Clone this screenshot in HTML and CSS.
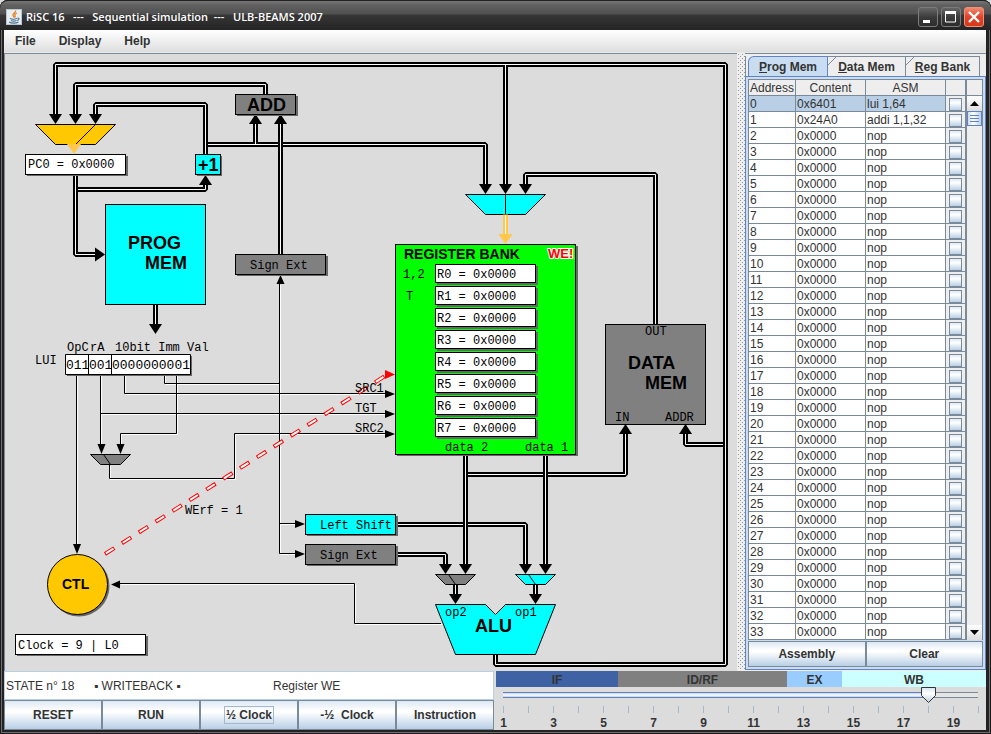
FILE: index.html
```html
<!DOCTYPE html>
<html lang="en">
<head>
<meta charset="utf-8">
<title>RiSC 16 --- Sequential simulation --- ULB-BEAMS 2007</title>
<link rel="stylesheet" href="styles.css">
</head>
<body>
<div class="window">
  <header class="titlebar">
    <svg class="app-icon" width="16" height="16" viewBox="0 0 16 16" aria-hidden="true">
      <rect x="0.5" y="0.5" width="15" height="15" fill="#e9eef2" stroke="#b9c6d0"/>
      <path d="M9.500 1.500c1 2-3.500 3-2.500 5 .3.700 1 1.200 1 2M11 4c-2 .8-2.500 1.600-2 2.600.4.900.3 1.400-.4 2" fill="none" stroke="#e8801c" stroke-width="1.300"/>
      <path d="M4 9.500c2 .9 5 .8 7 0M5 11.500c1.500.7 4 .7 5.500 0M3 13c2.500 1.500 7 1.500 9.500 0M11.500 9.200c2-.4 2 1.800-.3 2.300" fill="none" stroke="#4b7391" stroke-width="1.200"/>
    </svg>
    <h1 class="title">RiSC 16   ---   Sequential simulation  ---   ULB-BEAMS 2007</h1>
    <div class="controls">
      <button class="control" aria-label="Minimize"><svg width="20" height="20" viewBox="0 0 20 20"><rect x="5" y="13" width="7" height="3" fill="#fff"/></svg></button>
      <button class="control" aria-label="Maximize"><svg width="20" height="20" viewBox="0 0 20 20"><path d="M4.500 5v10h10V5z" fill="none" stroke="#fff"/><path d="M4 5.500h11" stroke="#fff" stroke-width="3"/></svg></button>
      <button class="control close" aria-label="Close"><svg width="20" height="20" viewBox="0 0 20 20"><path d="M5 5l10 10M15 5L5 15" stroke="#fff" stroke-width="2.400"/></svg></button>
    </div>
  </header>

  <nav class="menubar">
    <button class="menu">File</button>
    <button class="menu">Display</button>
    <button class="menu">Help</button>
  </nav>

  <main class="workspace">
    <section class="canvas">
      <svg class="schema" width="732" height="616" viewBox="5 54 732 616" role="img" aria-label="RiSC 16 datapath">
        <defs>
          <path id="down" d="M-6.500 0H6.500L0 10z"/>
          <path id="up" d="M-6.500 0H6.500L0-10z"/>
          <path id="down-s" d="M-4 0H4L0 10z"/>
          <path id="right-s" d="M0-4V4L10 0z"/>
          <!-- Wide buses: each path is drawn once in black and once as the white core -->
          <path id="bus-1" d="M205.500 144.500H485.500V185M465.500 474.500H625.500V434M397 524.500H525.500V565M397 554.500H445.500V565M75.500 189.500H205.500V184M725.500 444.500H685.500V434"/>
          <path id="bus-2" d="M495.500 655V664.500H725.500V64.500H55.500V115M265.500 94V84.500H75.500V115M205.500 154V104.500H95.500V115M655.500 324V174.500H525.500V185M75.500 175V254.500H96"/>
          <path id="bus-3" d="M505.500 65V185M255.500 144V124M280.500 254V124M155.500 305V325M465.500 456V565M545.500 456V565M455.500 585V595M535.500 585V595"/>
          <!-- Single wires, with a white highlight one pixel down and right -->
          <path id="wires" d="M76.500 375V545M100.500 375V445M100.500 413.500H386M124.500 375V393.500H386M164.500 375V383.500H279.500M176.500 375V433.500H120.500V445M109.500 465V478.500H234.500V433.500H386M279.500 284V553.500H296M279.500 523.500H296M441 623.500H354.500V583.500H120"/>
        </defs>

        <use href="#wires" class="wire-light" x="1" y="1"/>
        <use href="#wires" class="wire"/>
        <use href="#bus-1" class="bus"/><use href="#bus-1" class="core"/>
        <use href="#bus-2" class="bus"/><use href="#bus-2" class="core"/>
        <use href="#bus-3" class="bus"/><use href="#bus-3" class="core"/>

        <g>
          <use href="#down" x="55.500" y="114"/><use href="#down" x="75.500" y="114"/><use href="#down" x="95.500" y="114"/>
          <use href="#down" x="485.500" y="184"/><use href="#down" x="505.500" y="184"/><use href="#down" x="525.500" y="184"/>
          <use href="#down" x="155.500" y="324"/>
          <use href="#down" x="445.500" y="564"/><use href="#down" x="465.500" y="564"/><use href="#down" x="525.500" y="564"/><use href="#down" x="545.500" y="564"/>
          <use href="#down" x="455.500" y="594"/><use href="#down" x="535.500" y="594"/>
          <use href="#up" x="255.500" y="124"/><use href="#up" x="280.500" y="124"/><use href="#up" x="205.500" y="185"/>
          <use href="#up" x="625.500" y="434"/><use href="#up" x="685.500" y="434"/>
          <path d="M95 247.500v14l10-7z"/>
          <use href="#down-s" x="77" y="544"/><use href="#down-s" x="101.500" y="444"/><use href="#down-s" x="120.500" y="444"/>
          <use href="#right-s" x="385" y="394"/><use href="#right-s" x="385" y="414"/><use href="#right-s" x="385" y="434"/>
          <use href="#right-s" x="295" y="524"/><use href="#right-s" x="295" y="554"/>
          <path d="M276.500 284h8l-4-9zM120 580.500v8l-9-4z"/>
        </g>

        <!-- Multiplexers -->
        <g class="part">
          <path class="gold" d="M35.500 124.500h80l-20 20h-40z"/><path d="M95.500 124.500l-20 20"/>
          <path class="cyan" d="M465.500 194.500h80l-20 20h-40z"/><path d="M505.500 194.500v20"/>
          <path class="gray" d="M90.500 454.500h40l-10 10h-20z"/><path d="M103.500 454.500l7 10"/>
          <path class="gray" d="M435.500 574.500h40l-10 10h-20z"/><path d="M448.500 574.500l7 10"/>
          <path class="cyan" d="M515.500 574.500h40l-10 10h-20z"/><path d="M528.500 574.500l7 10"/>
          <path class="cyan" d="M435.500 604.500h50l10 10 10-10h50l-20 50h-80z"/>
        </g>
        <path class="live" d="M67 144h14l-7 10z"/>
        <path class="live" d="M503 214.500h5V234h4.500l-7 10-7-10h4.500z"/>
        <path class="core" d="M505.500 215v19"/>

        <!-- Box shadows -->
        <g class="shadow">
          <rect x="27" y="156" width="101" height="20"/>
          <rect x="197" y="156" width="25" height="20"/>
          <rect x="237" y="96" width="61" height="20"/>
          <rect x="237" y="256" width="91" height="20"/>
          <rect x="67" y="356" width="125" height="20"/>
          <rect x="307" y="516" width="91" height="20"/>
          <rect x="307" y="546" width="91" height="20"/>
          <rect x="397" y="246" width="181" height="210"/>
          <rect x="17" y="636" width="131" height="20"/>
          <circle cx="79" cy="586" r="30.500"/>
        </g>

        <!-- Blocks -->
        <g class="part">
          <rect class="white" x="25.500" y="154.500" width="100" height="20"/>
          <rect class="cyan" x="195.500" y="154.500" width="25" height="20"/>
          <rect class="gray" x="235.500" y="94.500" width="60" height="20"/>
          <rect class="gray" x="235.500" y="254.500" width="90" height="20"/>
          <rect class="cyan" x="105.500" y="204.500" width="100" height="100"/>
          <path class="white" d="M65.500 354.500h125v20h-125zM88.500 354.500v20M111.500 354.500v20"/>
          <rect class="cyan" x="305.500" y="514.500" width="90" height="20"/>
          <rect class="gray" x="305.500" y="544.500" width="90" height="20"/>
          <rect class="green" x="395.500" y="244.500" width="180" height="210"/>
          <rect class="gray" x="605.500" y="324.500" width="100" height="100"/>
          <rect class="white" x="15.500" y="634.500" width="130" height="20"/>
          <circle class="gold" cx="77.500" cy="584.500" r="30"/>
        </g>
        <g class="registers"></g>

        <!-- Control signal -->
        <path class="signal" d="M105 554L385 376"/>
        <path class="signal-core" d="M105 554L385 376"/>
        <path d="M385 370v9l10-4.500z" fill="#f00"/>

        <g class="big">
          <text x="247" y="111">ADD</text>
          <text x="198" y="171">+1</text>
          <text x="128" y="249">PROG</text><text x="145" y="269">MEM</text>
          <text x="628" y="369">DATA</text><text x="645" y="389">MEM</text>
          <text x="475" y="632">ALU</text>
        </g>
        <g class="medium">
          <text x="404" y="259">REGISTER BANK</text>
          <text x="62" y="589">CTL</text>
          <text class="we" x="548" y="258">WE!</text>
        </g>
        <g class="mono">
          <text x="28" y="168">PC0 = 0x0000</text>
          <text x="250" y="269">Sign Ext</text>
          <text x="67" y="351">OpC</text><text x="90" y="351">rA</text><text x="115" y="351">10bit Imm Val</text>
          <text x="35" y="364">LUI</text>
          <g class="bits"><text x="66" y="369">011</text><text x="89" y="369">001</text><text x="112" y="369">0000000001</text></g>
          <text x="403" y="278">1,2</text><text x="406" y="300">T</text>
          <text x="355" y="392">SRC1</text><text x="355" y="412">TGT</text><text x="355" y="432">SRC2</text>
          <text x="445" y="451">data 2</text><text x="525" y="451">data 1</text>
          <text x="645" y="335">OUT</text><text x="615" y="421">IN</text><text x="665" y="421">ADDR</text>
          <text x="185" y="514">WErf = 1</text>
          <text x="320" y="529">Left Shift</text><text x="320" y="559">Sign Ext</text>
          <text x="445" y="616">op2</text><text x="515" y="616">op1</text>
          <text x="18" y="649">Clock = 9 | L0</text>
        </g>
      </svg>
    </section>

    <div class="splitter" role="separator"></div>

    <aside class="memory">
      <div class="tabs" role="tablist">
        <button class="tab active" role="tab" aria-selected="true"><u>P</u>rog Mem</button>
        <button class="tab" role="tab"><u>D</u>ata Mem</button>
        <button class="tab" role="tab"><u>R</u>eg Bank</button>
      </div>
      <div class="panel">
        <div class="listing">
          <table>
            <colgroup><col class="c-address"><col class="c-content"><col class="c-asm"><col class="c-check"></colgroup>
            <thead><tr><th>Address</th><th>Content</th><th>ASM</th><th></th></tr></thead>
            <tbody id="rows"></tbody>
          </table>
          <div class="scrollbar">
            <div class="scroll-head"></div>
            <button class="scroll-step" aria-label="Scroll up"><svg width="9" height="5"><path d="M0 5L4.500 0 9 5z"/></svg></button>
            <div class="scroll-thumb"></div>
            <div class="scroll-track"></div>
            <button class="scroll-step" aria-label="Scroll down"><svg width="9" height="5"><path d="M0 0H9L4.500 5z"/></svg></button>
          </div>
        </div>
        <div class="actions">
          <button class="btn">Assembly</button>
          <button class="btn">Clear</button>
        </div>
      </div>
    </aside>
  </main>

  <footer class="bottom">
    <section class="left">
      <div class="status">
        <span class="state">STATE n° 18</span>
        <span class="phase">▪ WRITEBACK ▪</span>
        <span>Register WE</span>
      </div>
      <div class="actions">
        <button class="btn">RESET</button>
        <button class="btn">RUN</button>
        <button class="btn"><span class="focus">½ Clock</span></button>
        <button class="btn">-½&nbsp; Clock</button>
        <button class="btn">Instruction</button>
      </div>
    </section>
    <section class="right">
      <div class="stages">
        <div class="stage if">IF</div>
        <div class="stage id">ID/RF</div>
        <div class="stage ex">EX</div>
        <div class="stage wb">WB</div>
      </div>
      <input class="slider" type="range" min="1" max="20" value="18" aria-label="State number">
      <div class="ticks" id="ticks"></div>
    </section>
  </footer>
</div>
<script src="app.js"></script>
</body>
</html>
```
FILE: styles.css
```css
* { box-sizing: border-box; }

html, body { height: 100%; }

body {
  margin: 0;
  background: #d8dade;
  color: #333;
  font: 12px/14px "Liberation Sans", Arial, sans-serif;
}

button { margin: 0; padding: 0; border: 0; background: none; color: inherit; font: inherit; font-weight: bold; }

.window {
  display: grid;
  grid-template-rows: 30px 23px 1fr auto;
  min-height: 100%;
  padding: 0 5px 4px 4px;
  background: #242222;
  border-radius: 8px 8px 0 0;
  box-shadow: inset 0 0 0 1px #1c1a1a, inset 0 0 0 2px #6e6e6e;
}

/* Title bar */
.titlebar {
  display: flex;
  align-items: center;
  margin: 0 -5px 0 -4px;
  padding: 3px 7px 0 6px;
  border-radius: 8px 8px 0 0;
  border-top: 1px solid #222;
  background: linear-gradient(#777 0, #616161 4px, #505050 13px, #363636 14px, #242424 100%);
}
.title {
  flex: 1;
  margin: 0 0 0 4px;
  color: #fff;
  font: 600 11px/16px "Open Sans", "Noto Sans", sans-serif;
  white-space: pre;
}
.controls { display: flex; gap: 3px; }
.control {
  width: 20px;
  height: 20px;
  border: 1px solid #7c7c7c;
  border-radius: 3px;
  background: linear-gradient(#666, #3c3c3c 50%, #2c2c2c);
}
.control svg { display: block; margin: -1px; }
.control.close { border-color: #f0907c; background: linear-gradient(#f08a70, #e0432a 50%, #d83818); }

/* Menu */
.menubar {
  display: flex;
  gap: 23px;
  padding: 0 11px;
  background: linear-gradient(#fff, #dedede);
  border-bottom: 1px solid #e8e8e8;
}

/* Workspace */
.workspace {
  display: grid;
  grid-template-columns: minmax(0, 1fr) 8px 241px;
  background: #eee;
}
.canvas {
  overflow: hidden;
  border-top: 1px solid #7a8a99;
  border-left: 1px solid #7a8a99;
  background: #dcdcdc;
}
.schema { display: block; }
.splitter {
  margin: 1px 0;
  background:
    linear-gradient(#aaa, #aaa) 3px 2px / 1px 1px,
    #eee;
  background:
    conic-gradient(#999 25%, transparent 0) 2px 2px / 4px 4px,
    #eee;
  background:
    conic-gradient(at 1px 1px, transparent 75%, #999 0) 3px 2px / 4px 4px,
    conic-gradient(at 1px 1px, transparent 75%, #999 0) 1px 0 / 4px 4px,
    #eee;
}

/* Schematic */
.bus { fill: none; stroke: #000; stroke-width: 5; stroke-linejoin: bevel; }
.core { fill: none; stroke: #fff; stroke-width: 1; }
.wire { fill: none; stroke: #000; }
.wire-light { fill: none; stroke: #fff; }
.part { fill: none; stroke: #000; }
.gold { fill: #ffc800; }
.cyan { fill: #0ff; }
.gray { fill: #808080; }
.green { fill: #0f0; }
.white { fill: #fff; }
.live { fill: #ffc84b; }
.shadow { fill: #686868; }
.signal { fill: none; stroke: #f00; stroke-width: 4; stroke-dasharray: 11 9; }
.signal-core { fill: none; stroke: #fff; stroke-width: 2; stroke-dasharray: 9 11; stroke-dashoffset: -1; }
.big { font: bold 18px "Liberation Sans", Arial, sans-serif; }
.medium { font: bold 14px "Liberation Sans", Arial, sans-serif; }
.we { fill: #f00; stroke: #fff; stroke-width: 2; paint-order: stroke; font-size: 13px; }
.mono { font: 12px "Liberation Mono", "Courier New", monospace; white-space: pre; }
.bits { font-size: 13px; }

/* Memory tabs */
.memory {
  display: flex;
  flex-direction: column;
  border-top: 1px solid #7a8a99;
  padding-top: 2px;
  padding-bottom: 1px;
}
.tabs { display: flex; padding-left: 2px; border-left: 1px solid #7a8a99; }
.tab {
  flex: 0 0 78px;
  height: 20px;
  border: 1px solid #7a8a99;
  border-left: 0;
  border-bottom: 0;
  background: linear-gradient(135deg, #eee 5px, #7a8a99 5px 6px, #eee 6px);
  color: #333;
}
.tab.active {
  flex-basis: 80px;
  border: 1px solid #6382bf;
  border-width: 1px 1px 0;
  border-top-left-radius: 6px;
  background: #c8ddf2;
}
.tab:last-child { flex-basis: 74px; }
.panel {
  flex: 1;
  display: flex;
  flex-direction: column;
  border: 1px solid #6382bf;
  padding: 2px;
  background: #c8ddf2;
  gap: 1px;
}
.listing {
  display: grid;
  grid-template-columns: minmax(0, 1fr) 16px;
  border: 1px solid #7a8a99;
  border-bottom: 0;
  background: #fff;
}
table { width: 100%; table-layout: fixed; border-collapse: separate; border-spacing: 0; }
.c-address { width: 47px; }
.c-content { width: 70px; }
.c-check { width: 20px; }
th, td {
  height: 16px;
  padding: 1px 0 0 1px;
  border: 1px solid #7a8a99;
  border-width: 0 1px 1px 0;
  line-height: 14px;
  text-align: left;
  white-space: nowrap;
  overflow: hidden;
}
th { padding: 1px 0 0; background: #eee; font-weight: normal; text-align: center; }
.current td { background: #b8cfe5; }
td:last-child, .current td:last-child { padding: 1px 0 0 3px; background: #eee; line-height: 0; }
.check {
  appearance: none;
  display: block;
  width: 13px;
  height: 13px;
  margin: 0;
  border: 1px solid #7a8a99;
  background: linear-gradient(#e0eaf4, #fff 35%, #b8cfe5);
}
.scrollbar { display: flex; flex-direction: column; background: #eee; border-left: 1px solid #7a8a99; }
.scroll-head { height: 16px; border-bottom: 1px solid #7a8a99; }
.scroll-step { display: grid; place-items: center; height: 15px; background: linear-gradient(#fff, #ddd); }
.scroll-thumb {
  height: 15px;
  border: 1px solid #6382bf;
  background:
    repeating-linear-gradient(#6382bf 0 1px, transparent 1px 3px) center / 9px 7px no-repeat,
    linear-gradient(90deg, #c8ddf2, #fff 40%, #b8cfe5);
}
.scroll-track { flex: 1; }

/* Buttons */
.actions { display: flex; }
.btn {
  flex: 1;
  height: 26px;
  border: 1px solid #7a8a99;
  background: linear-gradient(#dde8f3, #fff 35%, #fff 40%, #b8cfe5);
}
.focus { padding: 1px; outline: 1px solid #a3b8cc; }

/* Bottom strip */
.bottom {
  display: grid;
  grid-template-columns: 1fr 1fr;
  gap: 2px;
  background: #dcdcdc;
}
.left { display: flex; flex-direction: column; }
.left .btn { height: 30px; }
.status {
  display: flex;
  align-items: center;
  height: 29px;
  padding-left: 1px;
  border: 1px solid #b8cfe5;
  background: #fff;
}
.state { width: 88px; }
.phase { width: 179px; }
.stages { display: flex; height: 16px; }
.stage { text-align: center; font-weight: bold; line-height: 18px; }
.if { flex: 122; background: #3f62a5; }
.id { flex: 169; background: #808080; }
.ex { flex: 55; background: #99ccff; }
.wb { flex: 144; background: #ccffff; }
.slider {
  appearance: none;
  display: block;
  width: 100%;
  height: 16px;
  margin: 0;
  background:
    linear-gradient(#6382bf 0 1px, #b8cfe5 1px, #fff 3px, #b8cfe5 5px, #6382bf 5px) 7px 5px / calc(89% - 13px) 6px no-repeat,
    linear-gradient(#7a8a99 0 1px, #e4e4e4 1px 5px, #7a8a99 5px) 7px 5px / calc(100% - 15px) 6px no-repeat;
}
.slider::-webkit-slider-thumb {
  appearance: none;
  width: 15px;
  height: 16px;
  background: url("data:image/svg+xml,%3Csvg xmlns='http://www.w3.org/2000/svg' width='15' height='16'%3E%3ClinearGradient id='g' x2='0' y2='1'%3E%3Cstop stop-color='%23d8e5f2'/%3E%3Cstop offset='.4' stop-color='white'/%3E%3Cstop offset='1' stop-color='%23b8cfe5'/%3E%3C/linearGradient%3E%3Cpath d='M.5.5h14v8l-7 7-7-7z' fill='url(%23g)' stroke='%23333'/%3E%3C/svg%3E");
}
.ticks { display: flex; justify-content: space-between; padding: 3px 7px 0; }
.tick {
  display: flex;
  justify-content: center;
  width: 1px;
  height: 24px;
  padding-top: 10px;
  background: linear-gradient(#a3b8cc, #a3b8cc) top / 1px 7px no-repeat;
  font-weight: bold;
}
```
FILE: app.js
```js
// Program memory listing
const program = { 0: ['0x6401', 'lui 1,64'], 1: ['0x24A0', 'addi 1,1,32'] };
let rows = '';
for (let i = 0; i < 34; i++) {
  const [content, asm] = program[i] || ['0x0000', 'nop'];
  rows += `<tr${i === 0 ? ' class="current"' : ''}><td>${i}</td><td>${content}</td><td>${asm}</td>` +
    `<td><input class="check" type="checkbox" aria-label="Breakpoint ${i}"></td></tr>`;
}
document.getElementById('rows').innerHTML = rows;

// Registers R0 to R7 of the register bank
let registers = '';
for (let r = 0; r < 8; r++) {
  const y = 264.5 + r * 22;
  registers += `<rect class="shadow" x="437" y="${y + 1.5}" width="101" height="19"/>` +
    `<rect class="white" stroke="#000" x="435.5" y="${y}" width="100" height="18"/>` +
    `<text class="mono" x="437" y="${y + 13.5}">R${r} = 0x0000</text>`;
}
document.querySelector('.registers').innerHTML = registers;

// Slider scale: a tick per state, a number on the odd ones
let ticks = '';
for (let n = 1; n <= 20; n++) ticks += `<span class="tick">${n % 2 ? n : ''}</span>`;
document.getElementById('ticks').innerHTML = ticks;
```
